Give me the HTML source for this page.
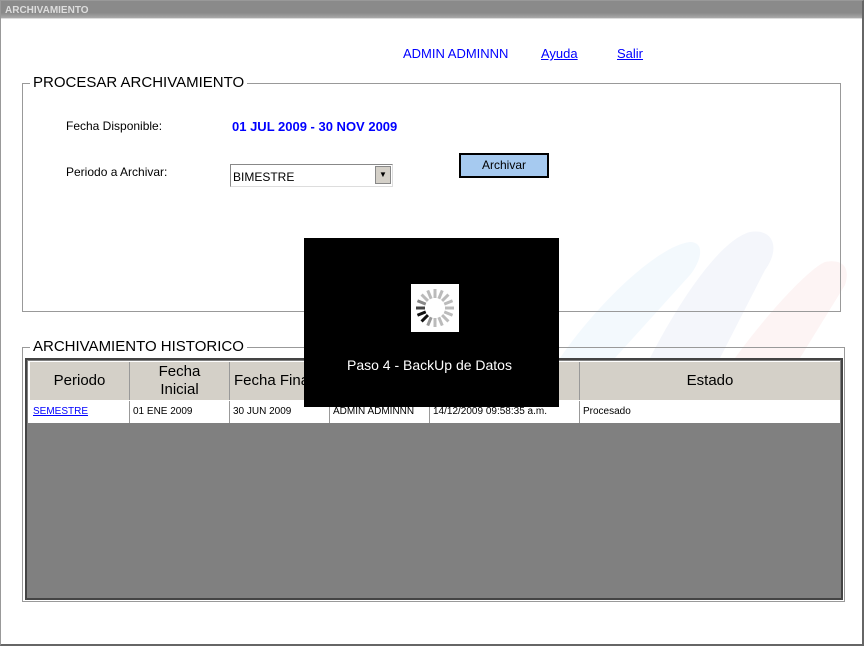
<!DOCTYPE html>
<html><head><meta charset="utf-8"><style>
*{margin:0;padding:0;box-sizing:border-box}
body{width:864px;height:646px;background:#fff;font-family:"Liberation Sans",sans-serif;position:relative;overflow:hidden}
.abs{position:absolute}
.t{font-size:12px;color:#000}
a{color:#00f}
</style></head><body>
<div class="abs" style="left:0;top:0;width:864px;height:646px;border:1px solid #999;border-right:2px solid #666;border-bottom:2px solid #666"></div>
<div class="abs" style="left:1px;top:1px;width:861px;height:18px;background:linear-gradient(#8a8a8a,#8a8a8a 70%,#aaa);border-bottom:1px solid #ddd"></div>
<div class="abs" style="left:5px;top:5px;font-size:10px;font-weight:bold;color:#ddd">ARCHIVAMIENTO</div>
<div class="abs" style="left:403px;top:46px;font-size:13px;color:#00f">ADMIN ADMINNN</div>
<div class="abs" style="left:541px;top:46px;font-size:13px;color:#00f;text-decoration:underline">Ayuda</div>
<div class="abs" style="left:617px;top:46px;font-size:13px;color:#00f;text-decoration:underline">Salir</div>
<svg class="abs" style="left:540px;top:210px" width="320" height="150">
<path d="M20 148 C60 90 120 35 150 32 C165 32 162 50 150 65 L75 148 Z" fill="#f3f9fd"/>
<path d="M110 148 C140 90 180 30 210 22 C235 18 240 40 225 60 L180 148 Z" fill="#f4f6fb"/>
<path d="M195 148 C230 100 270 58 285 52 C305 48 310 60 305 75 L260 148 Z" fill="#fdf4f4"/>
</svg>
<div class="abs" style="left:22px;top:83px;width:819px;height:229px;border:1px solid #999"></div>
<div class="abs" style="left:30px;top:74px;background:#fff;padding:0 3px;font-size:15px">PROCESAR ARCHIVAMIENTO</div>
<div class="abs t" style="left:66px;top:119px">Fecha Disponible:</div>
<div class="abs" style="left:232px;top:119px;font-size:13px;font-weight:bold;color:#00f">01 JUL 2009 - 30 NOV 2009</div>
<div class="abs t" style="left:66px;top:165px">Periodo a Archivar:</div>
<div class="abs" style="left:230px;top:164px;width:163px;height:23px;border:1px solid #888;border-right-color:#ddd;border-bottom-color:#ddd;font-size:12px;padding:5px 2px">BIMESTRE</div>
<div class="abs" style="left:375px;top:166px;width:16px;height:18px;background:#d4d0c8;border:1px solid #888;font-size:8px;text-align:center;line-height:16px">▼</div>
<div class="abs" style="left:459px;top:153px;width:90px;height:25px;background:#a6caf0;border:2px solid #000;font-size:12px;text-align:center;line-height:21px">Archivar</div>
<div class="abs" style="left:22px;top:347px;width:823px;height:255px;border:1px solid #999"></div>
<div class="abs" style="left:30px;top:338px;background:#fff;padding:0 3px;font-size:15px">ARCHIVAMIENTO HISTORICO</div>
<div class="abs" style="left:25px;top:358px;width:818px;height:242px;background:#808080;border:2px solid #444"></div>
<div class="abs" style="left:28px;top:361px;width:812px;height:62px;background:#fff"></div>
<div class="abs" style="left:30px;top:362px;width:810px;height:38px;background:#d4d0c8"></div>
<div class="abs" style="font-size:15px;left:30px;top:362px;width:100px;height:38px;text-align:center;line-height:38px;border-right:1px solid #999">Periodo</div>
<div class="abs" style="font-size:15px;left:130px;top:362px;width:100px;height:38px;text-align:center;line-height:18px;padding-top:1px;border-right:1px solid #999">Fecha<br>Inicial</div>
<div class="abs" style="font-size:15px;left:230px;top:362px;width:100px;height:38px;padding-left:4px;line-height:38px;border-right:1px solid #999">Fecha Final</div>
<div class="abs" style="left:330px;top:362px;width:100px;height:38px;border-right:1px solid #999"></div>
<div class="abs" style="left:430px;top:362px;width:150px;height:38px;border-right:1px solid #999"></div>
<div class="abs" style="font-size:15px;left:580px;top:362px;width:260px;height:38px;text-align:center;line-height:38px">Estado</div>
<div class="abs" style="left:30px;top:401px;width:810px;height:22px;font-size:10px">
<div class="abs" style="left:0;width:100px;height:22px;border-right:1px solid #999;padding:5px 3px"><a style="text-decoration:underline">SEMESTRE</a></div>
<div class="abs" style="left:100px;width:100px;height:22px;border-right:1px solid #999;padding:5px 3px">01 ENE 2009</div>
<div class="abs" style="left:200px;width:100px;height:22px;border-right:1px solid #999;padding:5px 3px">30 JUN 2009</div>
<div class="abs" style="left:300px;width:100px;height:22px;border-right:1px solid #999;padding:5px 3px">ADMIN ADMINNN</div>
<div class="abs" style="left:400px;width:150px;height:22px;border-right:1px solid #999;padding:5px 3px">14/12/2009 09:58:35 a.m.</div>
<div class="abs" style="left:550px;width:260px;height:22px;padding:5px 3px">Procesado</div>
</div>
<div class="abs" style="left:304px;top:238px;width:255px;height:169px;background:#000"></div>
<div class="abs" style="left:411px;top:284px;width:48px;height:48px;background:#fff"></div>
<svg class="abs" style="left:411px;top:284px" width="48" height="48" viewBox="-24 -24 48 48">
<g stroke-width="3" stroke-linecap="butt">
<line x1="0" y1="-10" x2="0" y2="-19" stroke="#bbb" transform="rotate(0)"/><line x1="0" y1="-10" x2="0" y2="-19" stroke="#bbb" transform="rotate(22.5)"/><line x1="0" y1="-10" x2="0" y2="-19" stroke="#bbb" transform="rotate(45)"/><line x1="0" y1="-10" x2="0" y2="-19" stroke="#bbb" transform="rotate(67.5)"/><line x1="0" y1="-10" x2="0" y2="-19" stroke="#bbb" transform="rotate(90)"/><line x1="0" y1="-10" x2="0" y2="-19" stroke="#bbb" transform="rotate(112.5)"/><line x1="0" y1="-10" x2="0" y2="-19" stroke="#bbb" transform="rotate(135)"/><line x1="0" y1="-10" x2="0" y2="-19" stroke="#bbb" transform="rotate(157.5)"/><line x1="0" y1="-10" x2="0" y2="-19" stroke="#bbb" transform="rotate(180)"/><line x1="0" y1="-10" x2="0" y2="-19" stroke="#999" transform="rotate(202.5)"/><line x1="0" y1="-10" x2="0" y2="-19" stroke="#111" transform="rotate(225)"/><line x1="0" y1="-10" x2="0" y2="-19" stroke="#111" transform="rotate(247.5)"/><line x1="0" y1="-10" x2="0" y2="-19" stroke="#444" transform="rotate(270)"/><line x1="0" y1="-10" x2="0" y2="-19" stroke="#888" transform="rotate(292.5)"/><line x1="0" y1="-10" x2="0" y2="-19" stroke="#bbb" transform="rotate(315)"/><line x1="0" y1="-10" x2="0" y2="-19" stroke="#bbb" transform="rotate(337.5)"/>
</g></svg>
<div class="abs" style="left:304px;top:357px;width:251px;text-align:center;color:#fff;font-size:14px">Paso 4 - BackUp de Datos</div>
</body></html>
